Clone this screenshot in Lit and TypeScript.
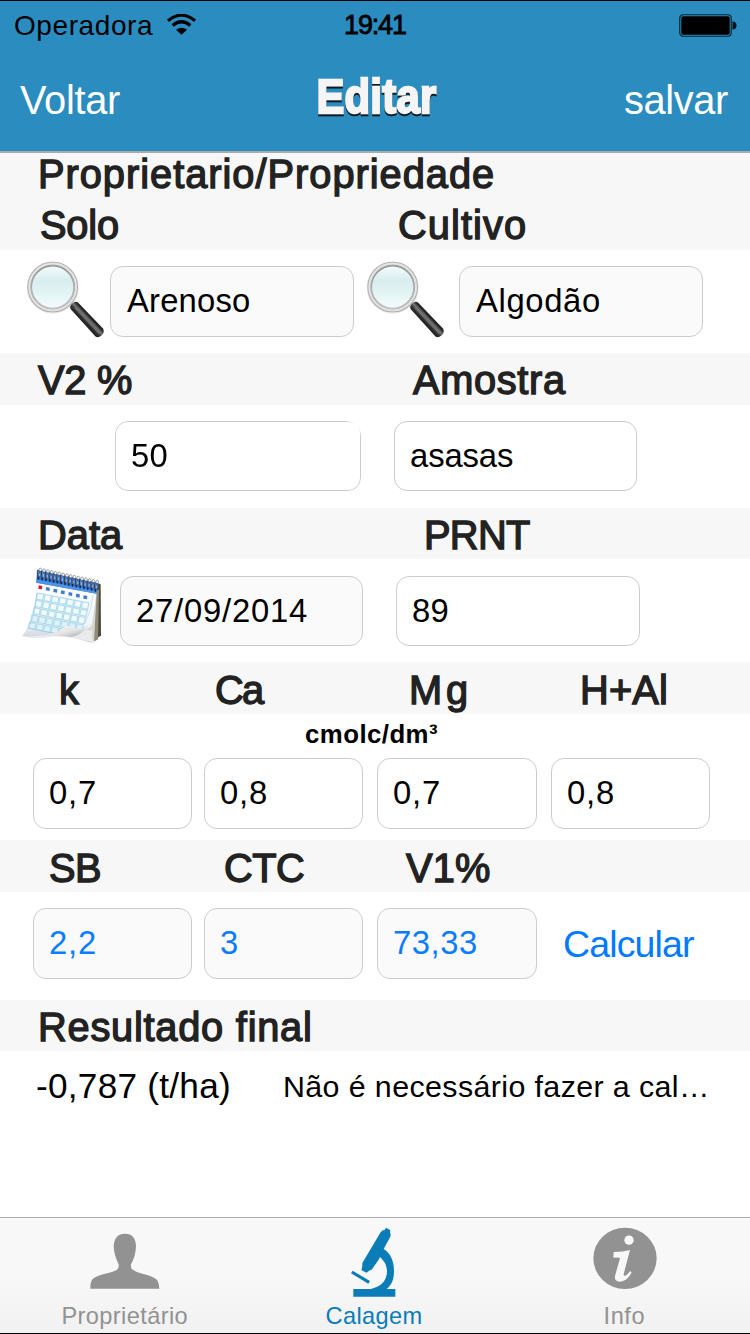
import { LitElement, html, css, svg } from 'lit';
import { customElement, property } from 'lit/decorators.js';

/** One line of text, tracked so that its ink fills exactly `w` pixels. */
@customElement('fit-text')
class FitText extends LitElement {
  static styles = css`
    :host { display: block; white-space: pre; flex: none; }
    span { display: block; width: max-content; }
  `;
  @property() text = '';
  @property({ type: Number }) w = 0;

  render() {
    return html`<span>${this.text}</span>`;
  }

  updated() {
    const span = this.renderRoot.querySelector('span') as HTMLElement;
    const ctx = document.createElement('canvas').getContext('2d')!;
    const cs = getComputedStyle(this);
    ctx.font = `${cs.fontWeight} ${cs.fontSize} ${cs.fontFamily}`;
    const m = ctx.measureText(this.text);
    const ink = m.actualBoundingBoxLeft + m.actualBoundingBoxRight;
    const n = this.text.length - 1;
    span.style.letterSpacing = n > 0 ? `${(this.w - ink) / n}px` : '0';
    span.style.marginLeft = `${m.actualBoundingBoxLeft}px`;
    this.style.width = `${this.w}px`;
  }
}

const t = (text: string, w: number) => html`<fit-text .text=${text} .w=${w}></fit-text>`;

const magnifier = html`<svg class="lens" width="84" height="84" viewBox="0 0 84 84">
  <defs>
    <linearGradient id="glass" x1="0" y1="0" x2="0" y2="1">
      <stop offset="0" stop-color="#f4fbfb" /><stop offset=".35" stop-color="#d8edef" />
      <stop offset=".65" stop-color="#e3f4f5" /><stop offset="1" stop-color="#f4fcfc" />
    </linearGradient>
    <linearGradient id="rim" x1="0" y1="0" x2="0" y2="1">
      <stop offset="0" stop-color="#8d9193" /><stop offset="1" stop-color="#c4c4c4" />
    </linearGradient>
    <linearGradient id="grip" x1="0" y1="1" x2="1" y2="0">
      <stop offset=".38" stop-color="#161616" /><stop offset=".46" stop-color="#333" />
      <stop offset=".52" stop-color="#777" /><stop offset=".58" stop-color="#222" />
    </linearGradient>
  </defs>
  <path d="M44 43l8 8" stroke="#bbb" stroke-width="5" />
  <path d="M44 43l8 8" stroke="#eee" stroke-width="2" />
  <circle cx="27.700" cy="27.500" r="25.900" fill="#e2e2e2" />
  <circle cx="27.700" cy="27" r="23.400" fill="#eee" stroke="#acacac" stroke-width="3.800" />
  <circle cx="27.700" cy="27" r="23.400" fill="none" stroke="#e4e4e4" stroke-width="2" />
  <circle cx="27.700" cy="27" r="21.200" fill="url(#glass)" stroke="url(#rim)" stroke-width="1.200" />
  <path d="M46 49.500q-2-3 1.200-6t6.300-.5l24.500 25.500q2 4-1.500 7t-6 1z" fill="url(#grip)" />
  <path d="M50 47.500l24.500 26" stroke="#6d6e70" stroke-width="1.800" />
</svg>`;

/* The wall calendar leans back: columns run down-left, rows slope down-right. */
const cell = (c: number, r: number): [number, number] => [
  70 + c * 22.500 - r * 4.200 - r * r * 0.35,
  88 + c * 4.400 + r * 22,
];
const calendar = html`<svg class="cal" width="100" height="90" viewBox="0 0 300 270">
  <defs>
    <linearGradient id="sheet" x1="0" y1="0" x2="0" y2="1">
      <stop offset="0" stop-color="#fdfeff" /><stop offset=".75" stop-color="#f2f6fa" />
      <stop offset="1" stop-color="#cfd3dc" />
    </linearGradient>
    <linearGradient id="curl" x1="0" y1="0" x2="1" y2="1">
      <stop offset="0" stop-color="#fff" /><stop offset=".55" stop-color="#e4e4e6" />
      <stop offset="1" stop-color="#9b9ea2" />
    </linearGradient>
  </defs>
  <path d="M246 70l11 3 1 154-18 10z" fill="#4e4a38" />
  <path d="M243 90l9 0-3 148-14 8-30-6z" fill="#8e8b7d" />
  <path d="M241 95l4 2-8 150-9 1-50-14 50-60z" fill="#d8d7cf" />
  <path d="M66 68L244 100Q236 160 232 188Q226 222 170 205Q130 226 90 232Q50 236 22 228Q56 180 66 68z" fill="url(#sheet)" />
  ${[0, 1, 2, 3, 4].map((r) => [0, 1, 2, 3, 4, 5, 6].map((c) => {
    const [x, y] = cell(c, r + 0.5);
    return svg`<path d="M${x} ${y}l19 3.700-3.700 18-19-3.700z" fill=${r > 2 ? '#dff1f8' : '#f3fbfe'} stroke="#aedbea" stroke-width="3.400" />`;
  }))}
  ${[0, 1, 2, 3, 4, 5, 6].map((c) => svg`<path d="M${71 + c * 22.500} ${76 + c * 5}l11 2-1 10-11-2z" fill=${c ? '#3f7bd0' : '#c71f35'} />`)}
  <path d="M65 100Q62 160 40 204L160 228" fill="none" stroke="#9cc4f2" stroke-width="2" />
  <path d="M235 104Q230 150 210 190" fill="none" stroke="#b6d3f4" stroke-width="2" />
  <path d="M22 228Q90 232 132 214Q160 196 232 212Q226 240 239 247L160 232Q110 226 76 234Q44 234 22 228z" fill="#e9eaed" />
  <path d="M80 232Q124 224 144 204Q158 192 186 205Q196 212 222 196Q190 236 160 230Q120 224 80 232z" fill="url(#curl)" />
  <path d="M66 30L250 70L245 101L64 68z" fill="#2f74d0" />
  <path d="M64 58L246 93L245 101L64 68z" fill="#4d93ea" />
  ${Array.from({ length: 16 }, (_, i) => {
    const x = 70 + i * 11.400;
    const y = 24 + i * 2.450;
    return svg`<path d="M${x} ${y + 8}v24" stroke="#1c2b45" stroke-width="5" stroke-linecap="round" />
      <path d="M${x + 1} ${y + 26}v-19q2-9 6-7t3 11" fill="none" stroke="#8b8d90" stroke-width="2.600" />
      <path d="M${x + 4} ${y + 24}v-8" stroke="#dfe6ef" stroke-width="2" />`;
  })}
</svg>`;

const wifi = html`<svg class="wifi" width="29" height="21" viewBox="0 0 87 63">
  <path d="M3 20Q43.500-13 84 20" fill="none" stroke="#000" stroke-width="9.500" />
  <path d="M17 34.500Q43.500 12 70 34.500" fill="none" stroke="#000" stroke-width="9.500" />
  <path d="M27 47Q43.500 35 60 47L43.500 62z" fill="#000" />
</svg>`;

const battery = html`<svg class="battery" width="58" height="23" viewBox="0 0 58 23">
  <rect x=".75" y=".75" width="51.500" height="21.500" rx="3.500" fill="none" stroke="#0c2533" stroke-width="1.200" />
  <rect x="2.300" y="2.300" width="48.400" height="18.400" rx="1.800" fill="#000" />
  <path d="M53.500 7.500q4 0 4 4t-4 4z" fill="#061118" />
</svg>`;

const person = html`<svg width="72" height="57" viewBox="269 85 216 171">
  <path d="M273 252q0-22 7-29q12-10 47-18q24-7 28-12q4-5 3-14q-14-27-15-54q2-38 34-38t33 38q-1 30-15 54q-1 10 3 15q9 7 31 13q33 8 42 17q8 8 9 28z" fill="#929292" />
</svg>`;

const microscope = html`<svg width="46" height="72" viewBox="1055 64 138 216" fill="#0a7cb8">
  <path d="M1062 253H1115C1146 246 1163 228 1163 200C1163 181 1153 164 1137 154L1150 131C1175 146 1184 170 1184 200C1184 226 1176 242 1162 253H1188V276H1062z" />
  <path d="M1160 69l13 8-1 7 2 4-1 8-23 42-11 26-22 31-5 2-11 7-15-8 2-7 1-7 0-7 54-91 7-7 5 0z" />
  <path d="M1060 198l52 31-5 8-52-31z" />
</svg>`;

const info = html`<svg width="64" height="63" viewBox="653 66 192 187">
  <ellipse cx="749" cy="159" rx="95" ry="92" fill="#929292" />
  <circle cx="761" cy="104.500" r="14" fill="#f8f8f8" />
  <path d="M715 140q28 0 49-6l-18 68q-3 12 4 9 9-5 14-13l5 3q-12 26-34 28-21 1-15-21l14-49q0-3-20-2z" fill="#f8f8f8" />
</svg>`;

@customElement('app-root')
class AppRoot extends LitElement {
  static styles = css`
    :host {
      display: flex; flex-direction: column; width: 750px; height: 1334px;
      box-sizing: border-box; border-top: 1px solid #000; border-bottom: 1px solid #000;
      font-family: "Liberation Sans", Arial, sans-serif; color: #000; background: #fff; overflow: hidden;
    }
    svg { display: block; flex: none; }
    header { height: 150px; background: #2b8cc0; border-bottom: 2px solid #a9abad; }
    .status { display: flex; height: 50px; font-size: 28px; line-height: 49px; padding-left: 15px; }
    .wifi { margin: 13px 0 0 14px; }
    .clock { margin-left: 150px; font-size: 27px; -webkit-text-stroke: .8px #000; }
    .battery { margin: 13px 0 0 273px; }
    .nav { display: flex; height: 100px; font-size: 39.8px; line-height: 98px; color: #fff; padding-left: 20px; }
    .title {
      margin: -3px 0 0 199px; width: 118px; font-size: 48px; font-weight: bold; color: #f5f5f5;
      -webkit-text-stroke: 2.400px #f5f5f5; filter: drop-shadow(0 2px 0 #101a20);
    }
    .title fit-text { transform: scaleX(.87); transform-origin: 0 50%; }
    .save { margin-left: 188px; }
    .band {
      display: grid; box-sizing: border-box; height: 52px; padding: 6px 0 0 41px; background: #f7f7f7;
      font-size: 39.800px; line-height: 42px; color: #222; -webkit-text-stroke: 1.350px #222;
    }
    .head { height: 97px; padding-top: 0; grid-template: 51px 42px / 359px auto; }
    .head fit-text:first-child { grid-column: span 2; }
    .v2 { padding-left: 38px; grid-template-columns: 375px auto; }
    .date { height: 51px; grid-template-columns: 386px auto; }
    .ions { padding: 7px 0 0 61px; grid-template-columns: 156px 195px 171px auto; }
    .sums { padding: 7px 0 0 50px; grid-template-columns: 176px 180px auto; }
    .final { height: 51px; }
    .row { display: flex; align-items: flex-start; box-sizing: border-box; }
    .field {
      box-sizing: border-box; width: 244px; height: 71px; border: 1px solid #ccc; border-radius: 13px;
      padding-left: 16px; font-size: 32.800px; line-height: 67px; background: #fff;
    }
    .off { background: #fafafa; }
    .soil { height: 103px; padding: 16px 0 0 25px; }
    .soil .lens { margin: -6px 1px 0 0; }
    .soil .lens:nth-of-type(2) { margin-left: 11px; margin-right: 10px; }
    .target { height: 103px; padding: 16px 0 0 115px; gap: 33px; }
    .target .field, .when .field { height: 70px; width: 243px; }
    .target .field:first-child {
      width: 246px;
      mask-image: radial-gradient(circle at 100% 0, transparent 5px, #000 16px);
      -webkit-mask-image: radial-gradient(circle at 100% 0, transparent 5px, #000 16px);
    }
    .when { height: 103px; padding: 17px 0 0 15px; }
    .cal { margin: -16px 5px 0 0; }
    .when .field:last-child { margin-left: 33px; width: 244px; }
    .unit { display: flex; height: 44px; padding-left: 306px; font-size: 25.800px; font-weight: bold; line-height: 41px; }
    .quad { padding-left: 33px; }
    .quad .field { width: 159px; margin-right: 12px; }
    .quad .field:nth-child(2) { margin-right: 14px; }
    .quad .field:nth-child(3) { width: 160px; margin-right: 14px; }
    .amounts { height: 82px; }
    .totals { height: 108px; padding-top: 16px; }
    .totals .field { color: #0a7cff; }
    .calc { margin-left: 13px; font-size: 37.500px; line-height: 72px; color: #007aff; }
    .result { height: 166px; padding-left: 37px; font-size: 35.200px; line-height: 70px; }
    .note { margin: 0 0 0 56px; font-size: 30.400px; }
    .tabs {
      display: grid; grid-template-columns: 1fr 1fr 1fr; height: 115px; border-top: 1px solid #b0b0b0;
      background: linear-gradient(#f8f8f8 50%, #f1f1f1); font-size: 23.600px; line-height: 28px; color: #929292;
    }
    .tab { display: grid; grid-template-rows: 84px 28px; justify-items: center; }
    .tab:nth-child(2) { color: #0a7cb8; padding-right: 2px; }
    .tab:first-child svg { margin-top: 15px; }
    .tab:nth-child(2) svg { margin-top: 8px; }
    .tab:nth-child(3) svg { margin-top: 9px; }
  `;

  private field(text: string, w: number, off = false) {
    return html`<div class="field ${off ? 'off' : ''}">${t(text, w)}</div>`;
  }

  render() {
    return html`
      <header>
        <div class="status">
          ${t('Operadora', 138)}${wifi}
          <div class="clock">${t('19:41', 60)}</div>
          ${battery}
        </div>
        <div class="nav">
          ${t('Voltar', 100)}
          <div class="title">${t('Editar', 134)}</div>
          <div class="save">${t('salvar', 103)}</div>
        </div>
      </header>
      <div class="band head">${t('Proprietario/Propriedade', 452)}${t('Solo', 77)}${t('Cultivo', 125)}</div>
      <div class="row soil">
        ${magnifier}${this.field('Arenoso', 122, true)}
        ${magnifier}${this.field('Algodão', 123, true)}
      </div>
      <div class="band v2">${t('V2 %', 93)}${t('Amostra', 153)}</div>
      <div class="row target">${this.field('50', 34.5)}${this.field('asasas', 102)}</div>
      <div class="band date">${t('Data', 82)}${t('PRNT', 103)}</div>
      <div class="row when">
        ${calendar}${this.field('27/09/2014', 170, true)}${this.field('89', 34.5)}
      </div>
      <div class="band ions">${t('k', 20)}${t('Ca', 48)}${t('Mg', 54)}${t('H+Al', 83)}</div>
      <div class="unit">${t('cmolc/dm³', 132)}</div>
      <div class="row quad amounts">
        ${this.field('0,7', 45)}${this.field('0,8', 45)}${this.field('0,7', 45)}${this.field('0,8', 45)}
      </div>
      <div class="band sums">${t('SB', 50)}${t('CTC', 78)}${t('V1%', 83)}</div>
      <div class="row quad totals">
        ${this.field('2,2', 45, true)}${this.field('3', 17, true)}${this.field('73,33', 82, true)}
        <div class="calc">${t('Calcular', 130)}</div>
      </div>
      <div class="band final">${t('Resultado final', 269)}</div>
      <div class="row result">
        ${t('-0,787 (t/ha)', 192)}
        <div class="note">${t('Não é necessário fazer a cal…', 421)}</div>
      </div>
      <div class="tabs">
        <div class="tab">${person}${t('Proprietário', 125)}</div>
        <div class="tab">${microscope}${t('Calagem', 95)}</div>
        <div class="tab">${info}${t('Info', 39)}</div>
      </div>
    `;
  }
}
